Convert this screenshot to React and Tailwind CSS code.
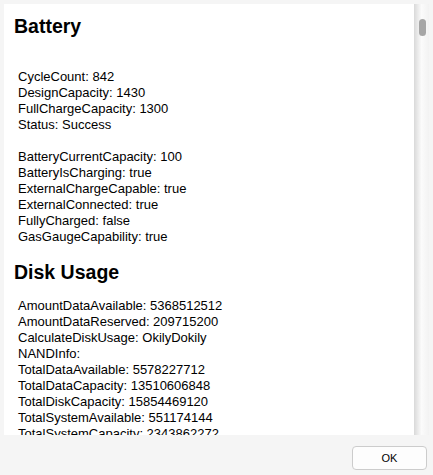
import React from "react";

const battery = [
  "",
  "CycleCount: 842",
  "DesignCapacity: 1430",
  "FullChargeCapacity: 1300",
  "Status: Success",
  "",
  "BatteryCurrentCapacity: 100",
  "BatteryIsCharging: true",
  "ExternalChargeCapable: true",
  "ExternalConnected: true",
  "FullyCharged: false",
  "GasGaugeCapability: true",
];

const disk = [
  "AmountDataAvailable: 5368512512",
  "AmountDataReserved: 209715200",
  "CalculateDiskUsage: OkilyDokily",
  "NANDInfo:",
  "TotalDataAvailable: 5578227712",
  "TotalDataCapacity: 13510606848",
  "TotalDiskCapacity: 15854469120",
  "TotalSystemAvailable: 551174144",
  "TotalSystemCapacity: 2343862272",
  "TotalSystemUsed: 1792688128",
];

function Lines({ items }) {
  return (
    <div className="ml-[4px] text-[13px] leading-[16px] text-black">
      {items.map((t, i) => (
        <div key={i} className="h-[16px] whitespace-pre">
          {t}
        </div>
      ))}
    </div>
  );
}

export default function App() {
  return (
    <div
      className="w-[433px] h-[475px] bg-[#f5f5f5] flex flex-col overflow-hidden"
      style={{ fontFamily: '"Liberation Sans", Arial, sans-serif' }}
    >
      <div className="mt-[4px] ml-[4px] flex h-[431px] w-[425px]">
        <div className="flex-1 bg-white overflow-hidden pl-[10px] pt-[11px]">
          <h2 className="text-[19.5px] leading-[22px] font-bold text-black mb-[16px]">
            Battery
          </h2>
          <Lines items={battery} />
          <h2 className="text-[19.5px] leading-[22px] font-bold text-black mt-[16px] mb-[15px]">
            Disk Usage
          </h2>
          <Lines items={disk} />
        </div>
        <div className="w-[15px] flex flex-col pt-[15px] pl-[5px] bg-gradient-to-r from-[#d9d9d9] via-[#fbfbfb] to-[#f2f2f2]">
          <div className="w-[7px] h-[17px] rounded-full bg-[#a6a6a6]" />
        </div>
      </div>
      <div className="flex-1 flex justify-end items-start pt-[11px] pr-[6px]">
        <button className="w-[75px] h-[24px] rounded-[4px] border border-[#cccccc] bg-[#fdfdfd] text-[11px] text-black flex items-center justify-center">
          OK
        </button>
      </div>
    </div>
  );
}
